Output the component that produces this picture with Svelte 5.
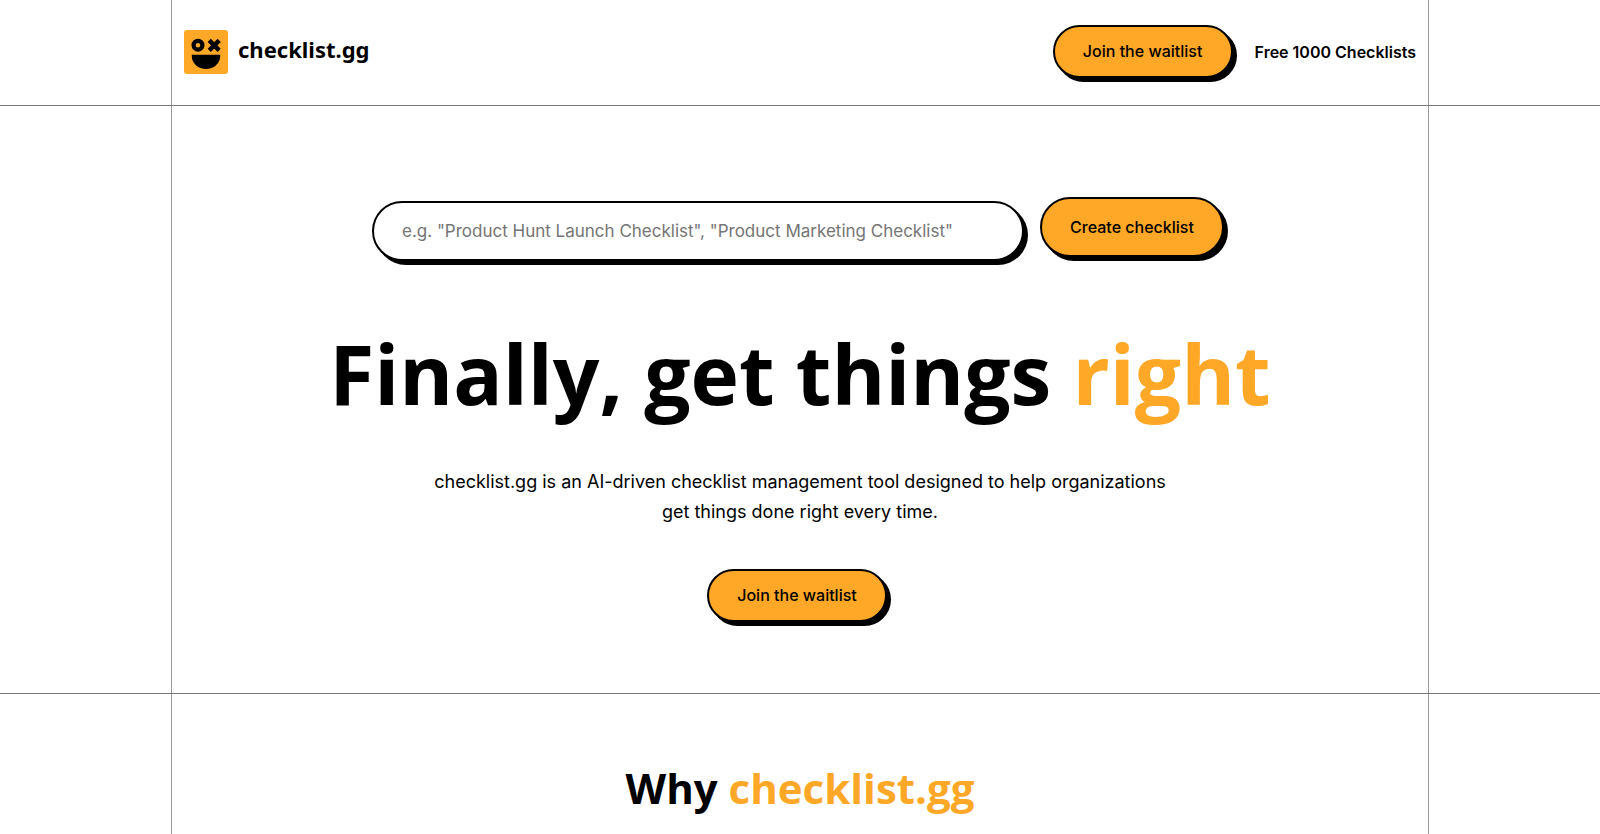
<script>
  let topic = $state('');
</script>

<div class="page">
  <header class="band">
    <div class="frame bar">
      <a class="brand" href="#top" aria-label="checklist.gg">
        <svg class="mark" viewBox="0 0 44 44" aria-hidden="true">
          <rect width="44" height="44" rx="3" fill="#ffa726" />
          <circle cx="14" cy="15.2" r="4.4" fill="none" stroke="#000" stroke-width="4.2" />
          <path d="M25.2 10.4 35.2 20.4M35.2 10.4 25.2 20.4" stroke="#000" stroke-width="4.4" />
          <path d="M7.8 24.8H36.2V26A14.2 13 0 0 1 7.8 26Z" fill="#000" />
        </svg>
        <span class="name">checklist.gg</span>
      </a>
      <nav class="links">
        <button class="pill" type="button">Join the waitlist</button>
        <a class="link" href="#free">Free 1000 Checklists</a>
      </nav>
    </div>
  </header>

  <main class="main">
    <section class="band">
      <div class="frame hero">
        <form class="search" onsubmit={(e) => e.preventDefault()}>
          <input
            class="field"
            type="text"
            aria-label="Checklist topic"
            placeholder={'e.g. "Product Hunt Launch Checklist", "Product Marketing Checklist"'}
            bind:value={topic}
          />
          <button class="pill tall" type="submit">Create checklist</button>
        </form>
        <h1>Finally, get things <span class="accent">right</span></h1>
        <p>
          checklist.gg is an AI-driven checklist management tool designed to help organizations get
          things done right every time.
        </p>
        <div class="action">
          <button class="pill" type="button">Join the waitlist</button>
        </div>
      </div>
    </section>

    <section class="why">
      <div class="frame reasons">
        <h2>Why <span class="accent">checklist.gg</span></h2>
      </div>
    </section>
  </main>
</div>

<style>
  :global(body) {
    background: #fff;
  }

  .page {
    display: flex;
    flex-direction: column;
    min-height: 100vh;
    color: #000;
    font-family: Inter, sans-serif;
    font-size: 16px;
  }

  .page,
  .page * {
    box-sizing: border-box;
  }

  .main {
    display: flex;
    flex: 1;
    flex-direction: column;
  }

  .band {
    border-bottom: 1px solid #777;
  }

  .frame {
    width: 100%;
    max-width: 1258px;
    margin: 0 auto;
    border: solid #999;
    border-width: 0 1px;
  }

  .bar {
    display: flex;
    align-items: center;
    justify-content: space-between;
    padding: 25px 12px 27px;
  }

  .brand {
    display: flex;
    align-items: center;
    gap: 10px;
    color: inherit;
    text-decoration: none;
  }

  .mark {
    width: 44px;
    height: 44px;
  }

  .name {
    padding-bottom: 6px;
    font-family: 'Noto Sans', sans-serif;
    font-size: 22px;
    font-weight: 700;
    line-height: 30px;
  }

  .links {
    display: flex;
    align-items: center;
    gap: 22px;
  }

  .link {
    color: inherit;
    font-weight: 600;
    text-decoration: none;
  }

  .pill {
    min-width: 180px;
    height: 53px;
    padding: 0 26px 2px;
    border: 2px solid #000;
    border-radius: 30px;
    background: #ffa726;
    box-shadow: 4px 4px 0 #000;
    color: #000;
    font-family: inherit;
    font-size: 16px;
    font-weight: 500;
    cursor: pointer;
  }

  .tall {
    min-width: 184px;
    height: 60px;
    padding-bottom: 0;
  }

  .hero {
    display: flex;
    flex-direction: column;
    align-items: center;
    padding: 91px 16px 71px;
    text-align: center;
  }

  .search {
    display: flex;
    align-items: flex-start;
    gap: 16px;
    width: 100%;
    max-width: 856px;
    padding-right: 4px;
  }

  .field {
    flex: 1;
    min-width: 0;
    height: 60px;
    margin-top: 4px;
    padding: 0 28px;
    border: 2px solid #000;
    border-radius: 30px;
    background: #fff;
    box-shadow: 4px 4px 0 #000;
    font-family: inherit;
    font-size: 17px;
  }

  .field::placeholder {
    color: #757575;
    opacity: 1;
  }

  h1,
  h2,
  p {
    margin: 0;
  }

  h1,
  h2 {
    font-family: 'Open Sans', sans-serif;
    font-weight: 700;
  }

  h1 {
    margin-top: 56px;
    font-size: 82px;
    line-height: 112px;
  }

  h2 {
    font-size: 42px;
    line-height: 56px;
  }

  .accent {
    color: #ffa726;
  }

  p {
    max-width: 760px;
    margin: 38px 0 42px;
    font-size: 18px;
    line-height: 30px;
  }

  .action {
    padding-right: 6px;
  }

  .why {
    display: flex;
    flex: 1;
  }

  .reasons {
    padding: 66px 16px 18px;
    text-align: center;
  }
</style>
